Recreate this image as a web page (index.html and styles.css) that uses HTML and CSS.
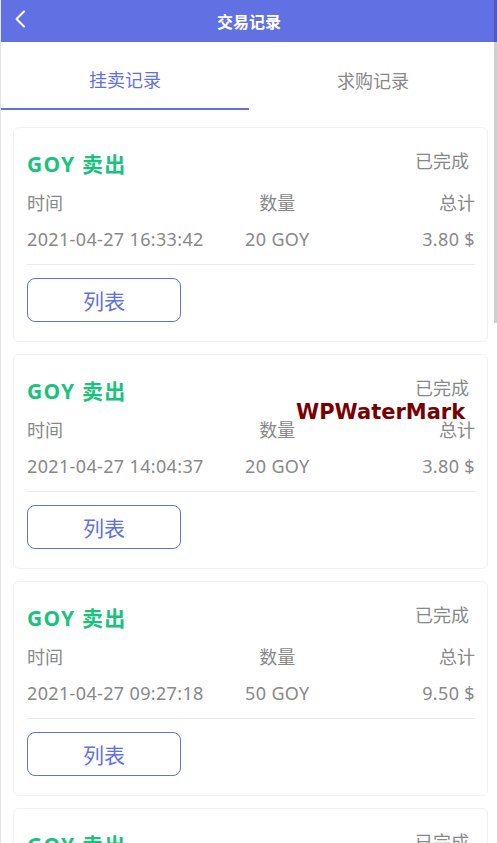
FILE: index.html
```html
<!DOCTYPE html>
<html lang="zh">
<head>
<meta charset="utf-8">
<title>交易记录</title>
<link rel="stylesheet" href="styles.css">
</head>
<body>
<div class="page">
  <header class="topbar">
    <svg class="back" width="12" height="18" viewBox="0 0 12 18"><path d="M10 1.5 L2.5 9 L10 16.5" fill="none" stroke="#fff" stroke-width="2" stroke-linecap="round" stroke-linejoin="round"/></svg>
    <h1 class="title">交易记录</h1>
  </header>
  <nav class="tabs">
    <div class="tab active">挂卖记录</div>
    <div class="tab">求购记录</div>
  </nav>
  <main class="list">
    <section class="card">
      <div class="card-head"><span class="name">GOY 卖出</span><span class="status">已完成</span></div>
      <div class="grid labels"><span>时间</span><span>数量</span><span>总计</span></div>
      <div class="grid values"><span>2021-04-27 16:33:42</span><span>20 GOY</span><span>3.80 $</span></div>
      <div class="divider"></div>
      <button class="btn">列表</button>
    </section>
    <section class="card">
      <div class="card-head"><span class="name">GOY 卖出</span><span class="status">已完成</span></div>
      <div class="grid labels"><span>时间</span><span>数量</span><span>总计</span></div>
      <div class="grid values"><span>2021-04-27 14:04:37</span><span>20 GOY</span><span>3.80 $</span></div>
      <div class="divider"></div>
      <button class="btn">列表</button>
    </section>
    <section class="card">
      <div class="card-head"><span class="name">GOY 卖出</span><span class="status">已完成</span></div>
      <div class="grid labels"><span>时间</span><span>数量</span><span>总计</span></div>
      <div class="grid values"><span>2021-04-27 09:27:18</span><span>50 GOY</span><span>9.50 $</span></div>
      <div class="divider"></div>
      <button class="btn">列表</button>
    </section>
    <section class="card">
      <div class="card-head"><span class="name">GOY 卖出</span><span class="status">已完成</span></div>
      <div class="grid labels"><span>时间</span><span>数量</span><span>总计</span></div>
      <div class="grid values"><span>2021-04-26 18:12:05</span><span>30 GOY</span><span>5.70 $</span></div>
      <div class="divider"></div>
      <button class="btn">列表</button>
    </section>
    <section class="card">
      <div class="card-head"><span class="name">GOY 卖出</span><span class="status">已完成</span></div>
      <div class="grid labels"><span>时间</span><span>数量</span><span>总计</span></div>
      <div class="grid values"><span>2021-04-26 11:40:51</span><span>20 GOY</span><span>3.80 $</span></div>
      <div class="divider"></div>
      <button class="btn">列表</button>
    </section>
    <section class="card">
      <div class="card-head"><span class="name">GOY 卖出</span><span class="status">已完成</span></div>
      <div class="grid labels"><span>时间</span><span>数量</span><span>总计</span></div>
      <div class="grid values"><span>2021-04-25 20:03:29</span><span>10 GOY</span><span>1.90 $</span></div>
      <div class="divider"></div>
      <button class="btn">列表</button>
    </section>
    <section class="card">
      <div class="card-head"><span class="name">GOY 卖出</span><span class="status">已完成</span></div>
      <div class="grid labels"><span>时间</span><span>数量</span><span>总计</span></div>
      <div class="grid values"><span>2021-04-25 15:22:14</span><span>20 GOY</span><span>3.80 $</span></div>
      <div class="divider"></div>
      <button class="btn">列表</button>
    </section>
    <section class="card">
      <div class="card-head"><span class="name">GOY 卖出</span><span class="status">已完成</span></div>
      <div class="grid labels"><span>时间</span><span>数量</span><span>总计</span></div>
      <div class="grid values"><span>2021-04-24 10:08:46</span><span>40 GOY</span><span>7.60 $</span></div>
      <div class="divider"></div>
      <button class="btn">列表</button>
    </section>
    <section class="card">
      <div class="card-head"><span class="name">GOY 卖出</span><span class="status">已完成</span></div>
      <div class="grid labels"><span>时间</span><span>数量</span><span>总计</span></div>
      <div class="grid values"><span>2021-04-23 17:55:33</span><span>20 GOY</span><span>3.80 $</span></div>
      <div class="divider"></div>
      <button class="btn">列表</button>
    </section>
    <div class="watermark">WPWaterMark</div>
  </main>
  <div class="scroll-thumb"></div>
</div>
</body>
</html>
```
FILE: styles.css
```css
html, body {
  margin: 0;
  background: #fff;
}
body {
  font-family: "Noto Sans", "Noto Sans CJK SC", sans-serif;
  color: #888;
}
.page {
  border-left: 1px solid #e2e2e2;
}
.scroll-thumb {
  position: fixed;
  top: 0;
  right: 0;
  width: 3px;
  height: 323px;
  background: rgba(0, 0, 0, 0.19);
}
.topbar {
  height: 42px;
  background: #6170e3;
  display: flex;
  align-items: center;
  justify-content: center;
  position: relative;
}
.back {
  position: absolute;
  left: 13px;
  top: 10px;
}
.title {
  margin: -1px 0 0;
  font-family: "Noto Sans CJK SC", sans-serif;
  font-size: 16px;
  font-weight: 700;
  color: #fff;
  line-height: 42px;
}
.tabs {
  display: flex;
  height: 68px;
}
.tab {
  flex: 1;
  display: flex;
  align-items: center;
  justify-content: center;
  font-size: 18px;
  color: #888;
  padding-top: 8px;
  box-sizing: border-box;
}
.tab.active {
  color: #6170e3;
  border-bottom: 2px solid #6170e3;
}
.list {
  position: relative;
  padding: 17px 9px 12px 12px;
  display: flex;
  flex-direction: column;
  gap: 12px;
}
.card {
  border: 1px solid #f1f1f1;
  border-radius: 6px;
  padding: 19px 12px 19px 13px;
  background: #fff;
}
.card-head {
  height: 32px;
  display: flex;
  align-items: center;
  justify-content: space-between;
}
.name {
  font-size: 21px;
  font-weight: 700;
  color: #19c37d;
  letter-spacing: 1.2px;
}
.status {
  font-size: 18px;
  color: #888;
  margin-top: -6px;
  margin-right: 6px;
}
.grid {
  display: grid;
  grid-template-columns: 1.4fr 1fr 1fr;
  height: 24px;
  line-height: 24px;
  margin-top: 12px;
  font-size: 18px;
  color: #888;
}
.values {
  letter-spacing: 0.35px;
}
.grid span:nth-child(2) {
  text-align: center;
}
.grid span:nth-child(3) {
  text-align: right;
}
.divider {
  height: 1px;
  background: #e8eaf0;
  margin-top: 13px;
}
.btn {
  display: block;
  margin-top: 13px;
  width: 154px;
  height: 44px;
  border: 1px solid #6170e3;
  border-radius: 8px;
  background: #fff;
  color: #6170e3;
  font-family: "Noto Sans CJK SC", sans-serif;
  font-size: 21px;
  padding: 0;
}
.watermark {
  position: absolute;
  left: 295px;
  top: 290px;
  font-family: "DejaVu Sans", sans-serif;
  font-weight: 700;
  font-size: 21px;
  color: #7a0000;
}
```
